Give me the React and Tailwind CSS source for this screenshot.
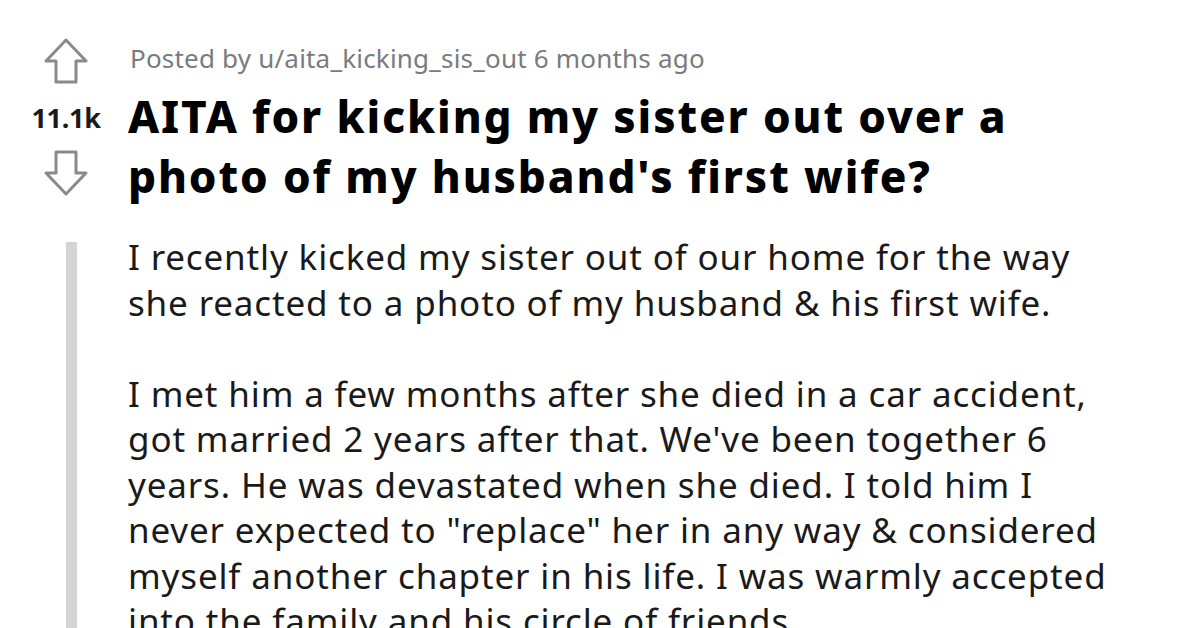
const Arrow = ({ down }) => (
  <svg width="44" height="46" viewBox="0 0 44 46" className={down ? "rotate-180" : ""}>
    <path
      d="M22 2 L42 23 L32 23 L32 44 L12 44 L12 23 L2 23 Z"
      fill="none"
      stroke="#888a8c"
      strokeWidth="3"
      strokeLinejoin="round"
    />
  </svg>
);

export default function App() {
  return (
    <div className="w-[1200px] h-[628px] overflow-hidden bg-white font-['Noto_Sans',sans-serif]">
      <div className="flex pt-[38px]">
        <div className="w-[128px] shrink-0 pl-[4px] flex flex-col items-center">
          <Arrow />
          <div className="mt-[19px] text-[27px] leading-[30px] font-bold text-[#1a1a1b] tracking-[-0.3px]">11.1k</div>
          <div className="mt-[17px]">
            <Arrow down />
          </div>
        </div>
        <div className="flex-1">
          <div className="pl-[2px] text-[26px] leading-[40px] text-[#787c7e] tracking-[0.2px]">
            Posted by u/aita_kicking_sis_out 6 months ago
          </div>
          <h1 className="mt-[8px] text-[44px] leading-[60px] font-extrabold text-black tracking-[1.9px] whitespace-nowrap">
            AITA for kicking my sister out over a<br />photo of my husband's first wife?
          </h1>
        </div>
      </div>
      <div className="flex mt-[28px]">
        <div className="w-[128px] shrink-0 flex">
          <div className="ml-[66px] mt-[8px] w-[11px] bg-[#d4d4d4]" />
        </div>
        <div className="flex-1 whitespace-nowrap text-[35px] leading-[45.5px] text-[#1a1a1a] tracking-[0.85px]">
          <p>
            I recently kicked my sister out of our home for the way
            <br />
            she reacted to a photo of my husband &amp; his first wife.
          </p>
          <p className="mt-[45.5px]">
            I met him a few months after she died in a car accident,
            <br />
            got married 2 years after that. We've been together 6
            <br />
            years. He was devastated when she died. I told him I
            <br />
            never expected to "replace" her in any way &amp; considered
            <br />
            myself another chapter in his life. I was warmly accepted
            <br />
            into the family and his circle of friends.
          </p>
        </div>
      </div>
    </div>
  );
}
